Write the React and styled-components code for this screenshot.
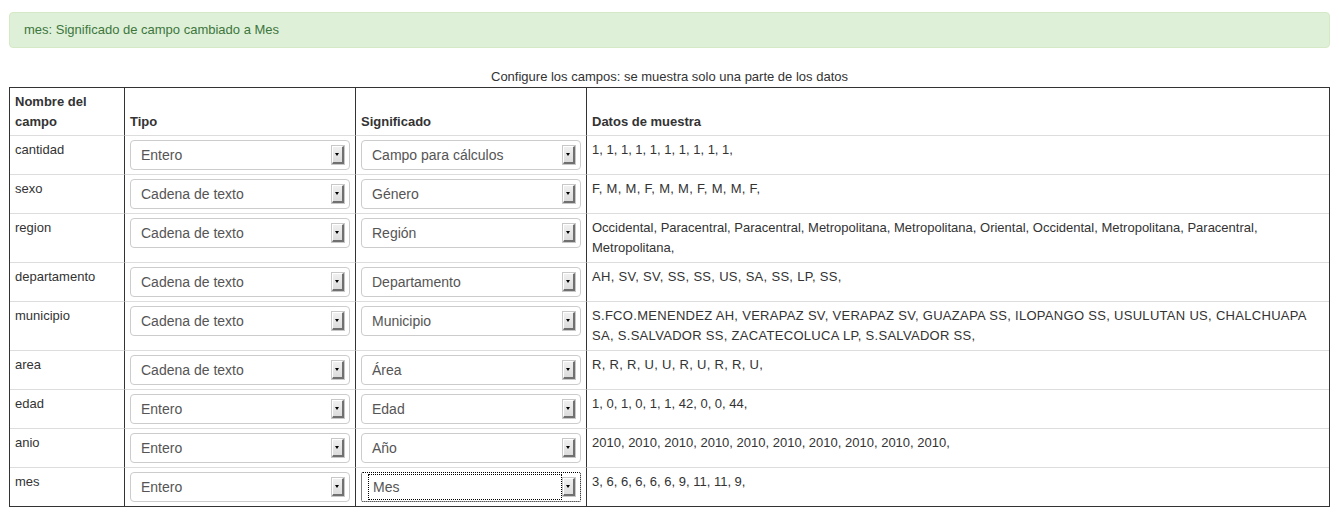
import React from "react";
import styled, { createGlobalStyle } from "styled-components";

const GlobalStyle = createGlobalStyle`
  body {
    margin: 0;
    padding: 12px 9px;
    background: #fff;
    font-family: "Liberation Sans", Arial, sans-serif;
    font-size: 13px;
    line-height: 20px;
    color: #333;
  }
`;

const rows = [
  { name: "cantidad", tipo: "Entero", sig: "Campo para cálculos", datos: "1, 1, 1, 1, 1, 1, 1, 1, 1, 1," },
  { name: "sexo", tipo: "Cadena de texto", sig: "Género", datos: "F, M, M, F, M, M, F, M, M, F," },
  {
    name: "region",
    tipo: "Cadena de texto",
    sig: "Región",
    datos:
      "Occidental, Paracentral, Paracentral, Metropolitana, Metropolitana, Oriental, Occidental, Metropolitana, Paracentral, Metropolitana,",
  },
  { name: "departamento", tipo: "Cadena de texto", sig: "Departamento", datos: "AH, SV, SV, SS, SS, US, SA, SS, LP, SS," },
  {
    name: "municipio",
    tipo: "Cadena de texto",
    sig: "Municipio",
    datos:
      "S.FCO.MENENDEZ AH, VERAPAZ SV, VERAPAZ SV, GUAZAPA SS, ILOPANGO SS, USULUTAN US, CHALCHUAPA SA, S.SALVADOR SS, ZACATECOLUCA LP, S.SALVADOR SS,",
  },
  { name: "area", tipo: "Cadena de texto", sig: "Área", datos: "R, R, R, U, U, R, U, R, R, U," },
  { name: "edad", tipo: "Entero", sig: "Edad", datos: "1, 0, 1, 0, 1, 1, 42, 0, 0, 44," },
  {
    name: "anio",
    tipo: "Entero",
    sig: "Año",
    datos: "2010, 2010, 2010, 2010, 2010, 2010, 2010, 2010, 2010, 2010,",
  },
  { name: "mes", tipo: "Entero", sig: "Mes", datos: "3, 6, 6, 6, 6, 6, 9, 11, 11, 9,", focused: true },
];

const isCaps = (s) => /[A-Z]/.test(s) && !/[a-z]/.test(s);

const Alert = styled.div`
  background: #dff0d8;
  border: 1px solid #d6e9c6;
  border-radius: 4px;
  color: #3c763d;
  padding: 7px 14px;
  margin-bottom: 19px;
`;

const Table = styled.table`
  width: 100%;
  table-layout: fixed;
  border-collapse: separate;
  border-spacing: 0;
  border: 1px solid #333;
`;

const Caption = styled.caption`
  text-align: center;
  color: #333;
`;

const Th = styled.th`
  box-sizing: border-box;
  width: ${(p) => p.$w || "auto"};
  text-align: left;
  vertical-align: bottom;
  font-weight: bold;
  padding: 4px 5px 3px;
  border-left: ${(p) => (p.$first ? "none" : "1px solid #333")};
`;

const Td = styled.td`
  vertical-align: top;
  padding: 4px 5px;
  border-top: 1px solid #ddd;
  border-left: ${(p) => (p.$first ? "none" : "1px solid #333")};
  letter-spacing: ${(p) => (p.$caps ? "0.3px" : "normal")};
`;

const Select = styled.div`
  box-sizing: border-box;
  height: 30px;
  display: flex;
  align-items: center;
  justify-content: space-between;
  padding: 0 5px 0 ${(p) => (p.$focused ? "6px" : "10px")};
  border: 1px ${(p) => (p.$focused ? "dotted #000" : "solid #ccc")};
  border-radius: ${(p) => (p.$focused ? "2px" : "4px")};
  background: #fff;
  font-size: 14px;
  color: #555;
`;

const Value = styled.span`
  flex: 1;
  height: ${(p) => (p.$focused ? "24px" : "auto")};
  line-height: ${(p) => (p.$focused ? "24px" : "20px")};
  padding-left: ${(p) => (p.$focused ? "4px" : "0")};
  margin-right: ${(p) => (p.$focused ? "1px" : "0")};
  border: ${(p) => (p.$focused ? "1px dotted #000" : "none")};
  white-space: nowrap;
`;

const Arrow = styled.span`
  box-sizing: border-box;
  position: relative;
  flex: none;
  width: 12px;
  height: 18px;
  background: linear-gradient(#f0f0f0, #dcdcdc);
  border-top: 1px solid #fff;
  border-left: 1px solid #fff;
  border-right: 2px solid #707070;
  border-bottom: 2px solid #707070;
  box-shadow: 0 0 0 1px #c8c8c8;

  &::after {
    content: "";
    position: absolute;
    left: 2px;
    top: 6px;
    border-left: 2.5px solid transparent;
    border-right: 2.5px solid transparent;
    border-top: 3px solid #000;
  }
`;

const Dropdown = ({ value, focused }) => (
  <Select $focused={focused}>
    <Value $focused={focused}>{value}</Value>
    <Arrow />
  </Select>
);

export default function App() {
  return (
    <>
      <GlobalStyle />
      <Alert>mes: Significado de campo cambiado a Mes</Alert>
      <Table>
        <Caption>Configure los campos: se muestra solo una parte de los datos</Caption>
        <thead>
          <tr>
            <Th $first $w="114px">
              Nombre del campo
            </Th>
            <Th $w="231px">Tipo</Th>
            <Th $w="231px">Significado</Th>
            <Th>Datos de muestra</Th>
          </tr>
        </thead>
        <tbody>
          {rows.map((r) => (
            <tr key={r.name}>
              <Td $first>{r.name}</Td>
              <Td>
                <Dropdown value={r.tipo} />
              </Td>
              <Td>
                <Dropdown value={r.sig} focused={r.focused} />
              </Td>
              <Td $caps={isCaps(r.datos)}>{r.datos}</Td>
            </tr>
          ))}
        </tbody>
      </Table>
    </>
  );
}
